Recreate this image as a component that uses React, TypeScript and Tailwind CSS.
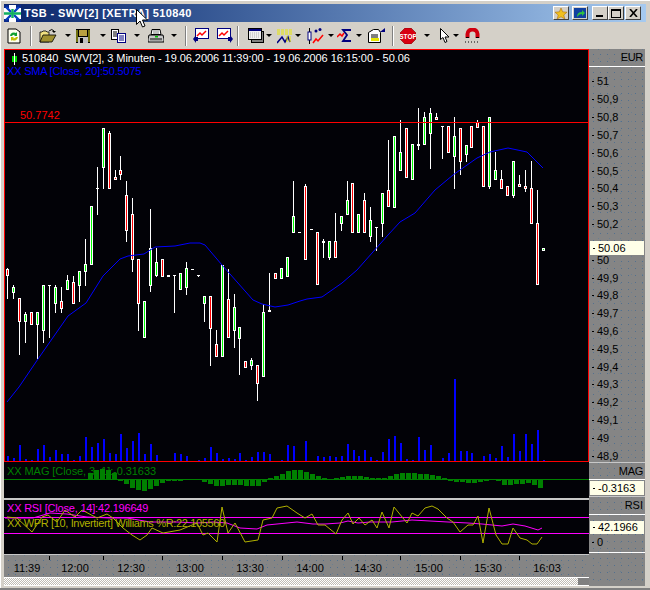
import React from "react";

type Candle = [number, number, number, number, number, "g" | "r" | "t"];

// x, wick top, wick bottom, body top, body bottom, kind (page pixels)
const candles: Candle[] = [
  [7, 268, 299, 269, 276, "r"], [13, 285, 299, 287, 293, "g"], [19, 298, 355, 298, 322, "r"],
  [25, 312, 343, 314, 322, "g"], [31, 312, 325, 312, 325, "r"], [37, 312, 359, 312, 325, "g"],
  [43, 285, 343, 285, 331, "g"], [49, 285, 338, 285, 286, "t"], [55, 285, 313, 287, 304, "g"],
  [61, 287, 313, 301, 309, "r"], [67, 275, 290, 280, 290, "g"], [73, 276, 304, 282, 304, "r"],
  [79, 271, 302, 271, 286, "g"], [85, 239, 286, 264, 272, "g"], [91, 206, 265, 206, 265, "g"],
  [97, 167, 215, 188, 189, "t"], [103, 128, 189, 128, 168, "g"], [109, 131, 189, 133, 189, "r"],
  [115, 170, 180, 177, 180, "r"], [120, 156, 180, 170, 175, "r"], [126, 181, 242, 195, 231, "r"],
  [132, 198, 272, 214, 260, "r"], [138, 259, 331, 259, 304, "r"], [144, 301, 338, 301, 338, "g"],
  [150, 209, 292, 248, 286, "g"], [156, 248, 277, 262, 276, "g"], [162, 259, 277, 259, 277, "r"],
  [168, 275, 277, 275, 277, "t"], [174, 275, 313, 275, 276, "t"], [180, 273, 290, 273, 290, "g"],
  [186, 262, 295, 268, 288, "g"], [192, 269, 270, 269, 270, "t"], [198, 275, 277, 275, 276, "t"],
  [204, 296, 322, 296, 304, "g"], [210, 296, 366, 296, 329, "r"], [216, 330, 357, 344, 357, "r"],
  [222, 265, 357, 265, 357, "g"], [228, 269, 338, 299, 338, "r"], [234, 294, 348, 307, 331, "g"],
  [239, 327, 375, 327, 339, "g"], [245, 361, 368, 361, 368, "r"], [251, 358, 370, 360, 366, "g"],
  [257, 365, 401, 365, 384, "r"], [263, 304, 377, 312, 377, "g"], [269, 273, 312, 310, 312, "r"],
  [275, 273, 279, 273, 279, "r"], [281, 268, 279, 268, 279, "g"], [287, 257, 277, 257, 277, "g"],
  [293, 181, 233, 216, 233, "g"], [299, 232, 233, 232, 233, "t"], [305, 184, 260, 186, 260, "r"],
  [311, 229, 230, 229, 230, "t"], [317, 232, 285, 232, 285, "r"], [323, 239, 258, 241, 243, "r"],
  [329, 241, 260, 241, 258, "g"], [335, 213, 258, 241, 258, "r"], [341, 216, 231, 216, 224, "g"],
  [347, 181, 215, 200, 215, "g"], [352, 183, 233, 183, 233, "r"], [358, 214, 233, 214, 233, "g"],
  [364, 193, 233, 200, 233, "r"], [370, 207, 242, 220, 237, "g"], [376, 227, 251, 227, 228, "t"],
  [382, 193, 237, 193, 224, "g"], [388, 140, 207, 190, 207, "r"], [394, 136, 208, 136, 208, "g"],
  [400, 120, 171, 152, 171, "g"], [406, 128, 178, 128, 178, "r"], [412, 144, 180, 144, 180, "g"],
  [418, 108, 150, 144, 146, "t"], [424, 112, 145, 117, 145, "g"], [430, 108, 169, 113, 134, "g"],
  [436, 113, 120, 117, 120, "r"], [442, 126, 159, 126, 127, "t"], [448, 126, 153, 126, 153, "r"],
  [454, 117, 189, 136, 157, "g"], [460, 128, 175, 128, 162, "r"], [466, 145, 162, 145, 155, "g"],
  [471, 126, 148, 126, 148, "r"], [477, 120, 128, 122, 128, "r"], [483, 126, 187, 126, 187, "r"],
  [489, 117, 189, 117, 187, "g"], [495, 152, 180, 170, 180, "g"], [501, 170, 189, 179, 189, "r"],
  [507, 186, 196, 186, 196, "r"], [513, 161, 198, 161, 196, "g"], [519, 175, 187, 184, 187, "r"],
  [525, 170, 192, 186, 189, "r"], [531, 161, 224, 188, 224, "r"], [537, 190, 285, 223, 285, "r"],
  [543, 248, 251, 248, 251, "g"],
];

// x, top of bar; all bars stand on y=461
const volume: [number, number][] = [
  [7, 456], [13, 458], [19, 445], [25, 459], [31, 460], [37, 449], [43, 445], [49, 457], [55, 450],
  [61, 454], [67, 454], [73, 460], [79, 456], [85, 437], [91, 447], [97, 443], [103, 439], [109, 453],
  [115, 454], [120, 434], [126, 448], [132, 441], [138, 433], [144, 454], [150, 444], [156, 455],
  [174, 453], [180, 454], [186, 456], [198, 460], [204, 458], [210, 447], [216, 453], [222, 459],
  [228, 458], [234, 459], [239, 453], [245, 460], [251, 457], [257, 452], [263, 452], [269, 454],
  [281, 460], [287, 445], [293, 446], [305, 441], [317, 456], [323, 457], [329, 456], [335, 457],
  [341, 456], [347, 444], [353, 450], [358, 456], [364, 450], [370, 457], [376, 460], [382, 452],
  [388, 439], [394, 436], [400, 443], [406, 459], [412, 460], [418, 437], [424, 450], [430, 445],
  [442, 458], [448, 453], [454, 379], [460, 451], [466, 451], [471, 453], [483, 456], [489, 454],
  [495, 458], [501, 446], [507, 457], [513, 434], [519, 451], [525, 434], [531, 444], [537, 430],
  [543, 460],
];

const sma = "7,402 19,387 38,359 68,316 86,303 103,276 120,259 128,256 144,254 155,247 175,246 190,243 200,243 205,245 222,265 253,300 262,304 275,307 288,305 300,301 307,299 322,297 342,283 357,270 388,235 400,222 415,213 435,190 453,175 477,158 490,152 508,148 527,152 543,168";

const mag: [number, number][] = [
  [5, 0], [85, 0], [93, 8], [103, 10], [113, 8], [120, 0], [133, -8], [143, -12], [157, -6], [167, -1], [200, 0],
  [217, -6], [233, -5], [260, -6], [267, -1], [277, 3], [290, 8], [300, 9], [313, 5], [325, 1], [335, 0],
  [345, 3], [358, 3], [372, 1], [388, 1], [393, 5], [405, 6], [425, 5], [442, 3], [447, 0], [458, -2],
  [472, -3], [485, -1], [498, 0], [505, -5], [518, -4], [532, -3], [538, -7], [545, -9],
];

const magAt = (x: number) => {
  for (let i = 1; i < mag.length; i++) {
    if (x <= mag[i][0]) {
      const [x0, y0] = mag[i - 1];
      const [x1, y1] = mag[i];
      return y0 + ((y1 - y0) * (x - x0)) / (x1 - x0);
    }
  }
  return 0;
};

const magBars = Array.from({ length: 90 }, (_, i) => 7 + i * 6);

const wpr = "7,517 17,518 32,532 42,517 48,515 57,522 65,510 75,517 82,510 97,518 107,514 113,518 123,528 132,535 140,540 147,535 152,528 163,533 180,530 197,523 203,535 208,533 217,542 222,507 228,533 235,523 245,542 258,540 263,520 272,518 277,508 287,506 297,513 305,518 312,514 318,525 325,525 336,534 342,520 348,513 353,524 359,518 365,525 372,520 377,528 382,512 389,528 394,507 407,523 412,513 418,516 425,508 432,506 438,509 447,518 453,522 460,532 468,525 473,525 478,516 483,543 489,508 496,535 502,544 508,544 513,528 520,538 527,540 532,544 537,544 542,537";
const rsi = "5,518 33,518 50,513 67,514 87,517 110,518 127,518 150,522 177,522 197,523 213,522 227,523 240,528 257,529 267,525 287,523 297,522 313,524 325,524 340,523 348,521 358,523 370,522 392,522 412,520 448,522 468,523 482,524 492,525 502,526 513,524 525,526 538,530 542,528";

// la etiqueta 50,1 queda tapada por el recuadro del último precio
const priceTicks = [
  "51", "50,9", "50,8", "50,7", "50,6", "50,5", "50,4", "50,3", "50,2", "", "50", "49,9", "49,8",
  "49,7", "49,6", "49,5", "49,4", "49,3", "49,2", "49,1", "49", "48,9",
];

const timeLabels: [string, number][] = [
  ["11:39", 27], ["12:00", 75], ["12:30", 131], ["13:00", 190], ["13:30", 250],
  ["14:00", 310], ["14:30", 368], ["15:00", 429], ["15:30", 488], ["16:03", 547],
];
const timeTicks = [49, 103, 162, 222, 282, 342, 400, 460, 519];

const dotted =
  "bg-[#858585] bg-[radial-gradient(#52708f_0.6px,transparent_0.8px),radial-gradient(#6c7f90_0.6px,transparent_0.8px)] bg-[length:7px_7px,11px_9px] bg-[position:1px_2px,4px_5px]";

function Arrow() {
  return <span className="w-0 h-0 border-x-[3px] border-x-transparent border-t-[3px] border-t-black" />;
}

function Sep() {
  return <span className="block w-[2px] h-[20px] bg-[#808080] border-r border-white" />;
}

function Logo() {
  return (
    <svg width="17" height="17" viewBox="0 0 17 17" className="shrink-0">
      <rect width="17" height="17" fill="#ffffff" />
      <path d="M0 0h5v3H0zM12 0h5v3h-5zM0 14h5v3H0zM12 14h5v3h-5z" fill="#0a2a8a" />
      <path d="M2 2l5 5M15 2l-5 5M2 15l5-5M15 15l-5-5" stroke="#0a3fc0" strokeWidth="2.4" />
      <path d="M0 8.5h17M8.5 4v9" stroke="#10b060" strokeWidth="2.4" />
    </svg>
  );
}

function Refresh() {
  return (
    <svg width="14" height="16" viewBox="0 0 14 16">
      <path d="M1 1h8l4 3v11H1z" fill="#fffff0" stroke="#000" />
      <path d="M3 8a4 4 0 0 1 6-3l1-1v4H7l1-1a2.500 2.500 0 0 0-3 1z" fill="#10a030" />
      <path d="M11 9a4 4 0 0 1-6 3l-1 1V9h3l-1 1a2.500 2.500 0 0 0 3-1z" fill="#c0c000" />
    </svg>
  );
}

function OpenIcon() {
  return (
    <svg width="18" height="15" viewBox="0 0 18 15">
      <path d="M1 4h2l1-1h3l1 1h2v10H1z" fill="#f0e080" stroke="#000" strokeWidth=".8" />
      <path d="M1 14l3-7h13l-4 7z" fill="#a09030" stroke="#000" strokeWidth=".8" />
      <path d="M10 3q3-3 5 0" fill="none" stroke="#000" />
      <path d="M13 3h4l-2 2z" fill="#000" />
    </svg>
  );
}

function SaveIcon() {
  return (
    <svg width="14" height="14" viewBox="0 0 14 14">
      <rect width="14" height="14" fill="#000" />
      <rect x="3" y="1" width="8" height="6" fill="#b8a040" />
      <rect x="2" y="8" width="10" height="6" fill="#c0c0c0" />
      <rect x="4" y="9" width="3" height="5" fill="#000" />
      <rect x="0" y="1" width="2" height="12" fill="#707010" />
      <rect x="12" y="1" width="2" height="12" fill="#707010" />
    </svg>
  );
}

function CopyIcon() {
  return (
    <svg width="15" height="14" viewBox="0 0 15 14">
      <rect x=".5" y=".5" width="7" height="10" fill="#fff" stroke="#000" />
      <path d="M2 3h4M2 5h4M2 7h4" stroke="#000" />
      <rect x="6.500" y="4.500" width="8" height="9" fill="#fff" stroke="#00007f" />
      <path d="M8 7h5M8 9h5M8 11h5" stroke="#00007f" />
    </svg>
  );
}

function PrintIcon() {
  return (
    <svg width="16" height="14" viewBox="0 0 16 14">
      <path d="M4 .5h8l1 5H3z" fill="#fff" stroke="#000" />
      <path d="M5 2h6M5 4h6" stroke="#808080" />
      <path d="M1 6h14l1 4v3H0v-3z" fill="#c8c8c8" stroke="#000" />
      <rect x="7" y="7" width="3" height="1.500" fill="#00c000" />
      <path d="M2 10h12" stroke="#000" />
      <path d="M2 12h12" stroke="#808080" />
    </svg>
  );
}

function ChartNav({ right }: { right?: boolean }) {
  return (
    <svg width="16" height="15" viewBox="0 0 16 15">
      <rect x={right ? 0.5 : 2.5} y=".5" width="13" height="10" fill="#fff" stroke="#00007f" />
      <path d={right ? "M2 8l3-3 2 2 4-4" : "M4 8l3-3 2 2 4-4"} fill="none" stroke="#ff0000" strokeWidth="1.500" />
      {right ? <path d="M11 9h2V7l3 4-3 4v-2h-2z" fill="#00007f" /> : <path d="M5 9H3V7l-3 4 3 4v-2h2z" fill="#00007f" />}
    </svg>
  );
}

function WindowsIcon() {
  return (
    <svg width="16" height="15" viewBox="0 0 16 15">
      <rect x="3.500" y="3.500" width="12" height="11" fill="#808080" stroke="#000" />
      <rect x=".5" y=".5" width="13" height="11" fill="#f0f0f0" stroke="#000" />
      <rect x="1" y="1" width="12" height="2" fill="#00007f" />
      <path d="M2 5h10M2 7h10M2 9h10" stroke="#b0b0b0" strokeDasharray="1 1" />
    </svg>
  );
}

function TimeIcon() {
  return (
    <svg width="16" height="16" viewBox="0 0 16 16">
      <path d="M0 2h16M0 4h16M0 6h16" stroke="#e8e800" strokeWidth="1.200" strokeDasharray="3 1" />
      <path d="M0 15l5-6 3 5 3-5 2 5" fill="none" stroke="#00007f" strokeWidth="1.500" />
      <path d="M9 9h6M9 11h6M9 13h6" stroke="#e8e800" strokeDasharray="2 1" />
    </svg>
  );
}

function CandleIcon() {
  return (
    <svg width="18" height="16" viewBox="0 0 18 16">
      <path d="M2.500 0v16" stroke="#000" />
      <rect x="1" y="4" width="3" height="8" fill="#fff" stroke="#00007f" />
      <circle cx="9" cy="3" r="1.500" fill="#00007f" />
      <circle cx="13" cy="1.500" r="1.500" fill="#00007f" />
      <path d="M6 15l3-4 2 2 5-6" fill="none" stroke="#ff0000" strokeWidth="1.500" />
    </svg>
  );
}

function SigmaIcon() {
  return (
    <svg width="16" height="13" viewBox="0 0 16 13">
      <path d="M0 8l3-3 2 2 2-3" fill="none" stroke="#ff0000" strokeWidth="1.500" />
      <path d="M14 1H6l4 5-4 6h8" fill="none" stroke="#00007f" strokeWidth="1.800" />
    </svg>
  );
}

function NoteIcon() {
  return (
    <svg width="17" height="15" viewBox="0 0 17 15">
      <path d="M.5 4.500l5-3h5l2 3v10H.5z" fill="#fff" stroke="#000" />
      <path d="M3 7h7M3 9h7" stroke="#000" />
      <rect x="3" y="10" width="8" height="3" fill="#e8e800" />
      <path d="M12 4l5-4v4z" fill="#00007f" />
    </svg>
  );
}

function StopIcon() {
  return (
    <svg width="16" height="16" viewBox="0 0 16 16">
      <path d="M5 0h6l5 5v6l-5 5H5l-5-5V5z" fill="#d80010" stroke="#800000" strokeWidth=".6" />
      <text x="8" y="10.500" textAnchor="middle" fontSize="6.500" fontWeight="700" fill="#fff" fontFamily="Liberation Sans, sans-serif">
        STOP
      </text>
    </svg>
  );
}

function PointerIcon() {
  return (
    <svg width="10" height="15" viewBox="0 0 10 15">
      <path d="M.5.500v11l2.500-2 2 5 2-1-2-4.500h4z" fill="#fff" stroke="#000" />
    </svg>
  );
}

function MagnetIcon() {
  return (
    <svg width="15" height="15" viewBox="0 0 15 15">
      <path d="M2.500 10V6a5 4.500 0 0 1 10 0v4" fill="none" stroke="#d00010" strokeWidth="4" />
      <path d="M1 9.500h3M11 9.500h3" stroke="#000" />
      <path d="M0 14h15" stroke="#000" strokeDasharray="1 2" />
    </svg>
  );
}

function CaptionButton({ children }: { children: React.ReactNode }) {
  return (
    <div className="w-[16px] h-[14px] bg-[#d4d0c8] border border-t-white border-l-white border-r-[#404040] border-b-[#404040] flex items-center justify-center">
      {children}
    </div>
  );
}

export default function App() {
  return (
    <div className="relative w-[650px] h-[590px] overflow-hidden bg-[#d4d0c8] font-['Liberation_Sans',sans-serif] flex flex-col pt-[4px] pl-[4px] shadow-[inset_1px_1px_0_#ffffff]">
      {/* barra de título */}
      <div className="h-[18px] w-[642px] shrink-0 flex items-center bg-gradient-to-r from-[#0a246a] to-[#a6caf0]">
        <Logo />
        <span className="ml-[3px] text-[11px] font-bold text-white tracking-[0.37px] whitespace-pre">TSB - SWV[2] [XETRA] 510840</span>
        <div className="ml-auto mr-[5px] flex items-center">
          <CaptionButton>
            <svg width="12" height="11" viewBox="0 0 12 11">
              <path d="M6 0l1.700 3.800L12 4.200 8.800 7l1 4L6 8.800 2.200 11l1-4L0 4.200l4.300-.4z" fill="#f0c020" stroke="#a06000" strokeWidth=".5" />
            </svg>
          </CaptionButton>
          <div className="w-[3px]" />
          <CaptionButton>
            <div className="w-[12px] h-[10px] bg-[#1040a0] flex items-center justify-center">
              <svg width="9" height="8" viewBox="0 0 9 8">
                <path d="M1 8q0-5 5-5V1l3 3-3 3V5q-3 0-5 3z" fill="#30c040" />
              </svg>
            </div>
          </CaptionButton>
          <div className="w-[4px]" />
          <CaptionButton>
            <div className="w-[7px] h-[2px] bg-black mt-[6px] mr-[2px]" />
          </CaptionButton>
          <CaptionButton>
            <div className="w-[10px] h-[9px] border border-black border-t-2" />
          </CaptionButton>
          <div className="w-[1px]" />
          <CaptionButton>
            <svg width="9" height="8" viewBox="0 0 9 8">
              <path d="M1 0l7 8M8 0L1 8" stroke="#000" strokeWidth="1.600" />
            </svg>
          </CaptionButton>
        </div>
      </div>

      {/* barra de herramientas */}
      <div className="h-[27px] w-[642px] shrink-0 flex items-center pl-[3px]">
        <Refresh />
        <span className="ml-[9px]"><Sep /></span>
        <span className="ml-[7px] flex"><OpenIcon /></span>
        <span className="ml-[8px] flex"><Arrow /></span>
        <span className="ml-[5px] flex"><SaveIcon /></span>
        <span className="ml-[10px] flex"><Arrow /></span>
        <span className="ml-[5px] flex"><CopyIcon /></span>
        <span className="ml-[8px] flex"><Arrow /></span>
        <span className="ml-[8px] flex"><PrintIcon /></span>
        <span className="ml-[7px] flex"><Arrow /></span>
        <span className="ml-[8px]"><Sep /></span>
        <span className="ml-[6px] flex"><ChartNav /></span>
        <span className="ml-[8px] flex"><ChartNav right /></span>
        <span className="ml-[4px]"><Sep /></span>
        <span className="ml-[9px] flex"><WindowsIcon /></span>
        <span className="ml-[2px] flex"><Arrow /></span>
        <span className="ml-[5px] flex"><TimeIcon /></span>
        <span className="ml-[2px] flex"><Arrow /></span>
        <span className="ml-[6px] flex"><CandleIcon /></span>
        <span className="ml-[3px] flex"><Arrow /></span>
        <span className="ml-[3px] flex"><SigmaIcon /></span>
        <span className="ml-[3px] flex"><Arrow /></span>
        <span className="ml-[6px] flex"><NoteIcon /></span>
        <span className="ml-[7px]"><Sep /></span>
        <span className="ml-[6px] flex"><StopIcon /></span>
        <span className="ml-[8px] flex"><Arrow /></span>
        <span className="ml-[10px] flex"><PointerIcon /></span>
        <span className="ml-[3px] flex"><Arrow /></span>
        <span className="ml-[6px] flex"><MagnetIcon /></span>
      </div>

      <div className="flex w-[642px] h-[537px] shrink-0 text-[11px]">
        {/* columna del gráfico */}
        <div className="w-[585px] shrink-0 flex flex-col">
          <div className="relative w-[585px] h-[413px] shrink-0 bg-[#020207]">
            <svg width="585" height="413" viewBox="4 49 585 413" shapeRendering="crispEdges" className="block">
              {candles.map(([x, wt, wb, bt, bb, kind], i) => (
                <g key={i}>
                  <path d={`M${x + 0.5} ${wt}V${wb}`} stroke="#ffffff" />
                  <rect x={x - 1} y={bt} width="3" height={bb - bt} fill="#ffffff" />
                  {kind !== "t" && bb - bt > 2 && (
                    <path d={`M${x + 0.5} ${bt + 1}V${bb - 1}`} stroke={kind === "g" ? "#00ff00" : "#ff0000"} />
                  )}
                </g>
              ))}
              {volume.map(([x, top]) => (
                <rect key={x} x={x} y={top} width="2" height={461 - top} fill="#0000ff" />
              ))}
              <polyline points={sma} fill="none" stroke="#0000ff" strokeWidth="1" shapeRendering="auto" />
              <path d="M4 122.500H589M4.500 49V462M588.500 49V462M4 49.500H589M4 461.500H589" stroke="#ff0000" fill="none" />
              <path d="M12 56h5v6h-5z" fill="#00e000" />
              <path d="M14.500 53v12" stroke="#ffffff" />
            </svg>
            <div className="absolute left-[18px] top-[2px] text-white text-[11px] leading-[15px] whitespace-pre tracking-[-0.06px]">
              510840  SWV[2], 3 Minuten - 19.06.2006 11:39:00 - 19.06.2006 16:15:00 - 50.06
            </div>
            <div className="absolute left-[3px] top-[15px] text-[#0000ff] text-[11px] leading-[15px] whitespace-pre tracking-[-0.2px]">XX SMA [Close, 20]:50.5075</div>
            <div className="absolute left-[16px] top-[59px] text-[#ff0000] text-[11px] leading-[15px]">50.7742</div>
          </div>

          <div className="relative w-[585px] h-[36px] shrink-0 bg-[#020207]">
            <svg width="585" height="36" viewBox="4 462 585 36" shapeRendering="crispEdges" className="block">
              <path d="M4 479.500H589" stroke="#008000" />
              {magBars.map((x) => {
                const h = Math.round(magAt(x));
                if (h === 0) return null;
                return h > 0 ? (
                  <rect key={x} x={x - 3} y={479 - h} width="5" height={h} fill="#008000" />
                ) : (
                  <rect key={x} x={x - 3} y={480} width="5" height={-h} fill="#008000" />
                );
              })}
            </svg>
            <div className="absolute left-[3px] top-[2px] text-[#008000] text-[11px] leading-[15px] whitespace-pre tracking-[-0.07px]">XX MAG [Close, 3, 1]:-0.31633</div>
          </div>

          <div className="h-[2px] w-[585px] shrink-0 bg-[#c8c8c8]" />

          <div className="relative w-[585px] h-[54px] shrink-0 bg-[#020207]">
            <svg width="585" height="54" viewBox="4 500 585 54" className="block">
              <path d="M4 517.500H589M4 533.500H589" stroke="#ff00ff" shapeRendering="crispEdges" />
              <polyline points={rsi} fill="none" stroke="#ff00ff" strokeWidth="1" />
              <polyline points={wpr} fill="none" stroke="#b0b000" strokeWidth="1" />
            </svg>
            <div className="absolute left-[3px] top-[1px] text-[#ff00ff] text-[11px] leading-[15px] whitespace-pre tracking-[-0.2px]">XX RSI [Close, 14]:42.196649</div>
            <div className="absolute left-[3px] top-[16px] text-[#b0b000] text-[11px] leading-[15px] whitespace-pre tracking-[-0.35px]">XX WPR [10, Invertiert] Williams %R:22.105560</div>
          </div>

          {/* eje de tiempo */}
          <div className={`relative w-[585px] h-[23px] shrink-0 border-t border-[#c8c8c8] text-black ${dotted}`}>
            {timeTicks.map((x) => (
              <div key={x} style={{ left: x - 4 }} className="absolute top-[1px] w-px h-[4px] bg-black" />
            ))}
            {timeLabels.map(([t, x]) => (
              <span key={t} style={{ left: x - 4 }} className="absolute top-[6px] leading-[14px] -translate-x-1/2">{t}</span>
            ))}
          </div>

          <div className="h-px w-[585px] shrink-0 bg-white" />
          {/* barra de desplazamiento */}
          <div className="h-[7px] w-[585px] shrink-0 flex bg-[length:2px_2px] bg-[repeating-conic-gradient(#c0bcb4_0_25%,#ffffff_0_50%)]">
            <div className="ml-auto w-[11px] h-full bg-[#808080]" />
          </div>
          <div className="h-px w-[585px] shrink-0 bg-white" />
        </div>

        {/* escala derecha */}
        <div className="w-[56px] shrink-0 flex flex-col text-black">
          <div className={`h-[17px] shrink-0 flex items-center justify-end pr-[2px] tracking-[-0.3px] ${dotted}`}>EUR</div>
          <div className="h-[1px] shrink-0 bg-white" />
          <div className={`relative h-[395px] shrink-0 pt-[6px] ${dotted}`}>
            {priceTicks.map((p, i) => (
              <div key={i} className="h-[17.830px] flex items-center gap-[3px] pl-[3px] leading-none">
                <span className="w-[2px] h-px bg-black" />
                <span>{p}</span>
              </div>
            ))}
            <div className="absolute left-[1px] top-[174px] w-[54px] h-[14px] bg-[#ffffe8] flex items-center gap-[3px] pl-[3px]">
              <span className="w-[2px] h-px bg-black" />
              <span>50.06</span>
            </div>
          </div>
          <div className={`h-[17px] shrink-0 flex items-center justify-end pr-[2px] tracking-[-0.3px] border-t border-[#c8c8c8] ${dotted}`}>MAG</div>
          <div className={`h-[17px] shrink-0 border-t border-white flex flex-col justify-start ${dotted}`}>
            <div className="ml-[1px] mt-[1px] w-[54px] h-[14px] bg-[#ffffe8] flex items-center gap-[3px] pl-[3px]">
              <span className="w-[2px] h-px bg-black" />
              <span>-0.3163</span>
            </div>
          </div>
          <div className={`h-[18px] shrink-0 flex items-center justify-end pr-[2px] border-t border-[#c8c8c8] ${dotted}`}>RSI</div>
          <div className={`h-[38px] shrink-0 border-t border-white flex flex-col ${dotted}`}>
            <div className="ml-[1px] mt-[6px] w-[54px] h-[13px] bg-[#ffffe8] flex items-center gap-[3px] pl-[3px]">
              <span className="w-[2px] h-px bg-black" />
              <span>42.1966</span>
            </div>
            <div className="flex items-center gap-[3px] pl-[3px] h-[17px]">
              <span className="w-[2px] h-px bg-black" />
              <span>0</span>
            </div>
          </div>
          <div className={`flex-1 border-t border-white ${dotted}`} />
        </div>
      </div>

      <div className="absolute left-0 right-0 bottom-0 h-[2px] bg-[#808080]" />

      {/* puntero del ratón */}
      <svg width="12" height="19" viewBox="0 0 12 19" className="absolute left-[136px] top-[9px]">
        <path d="M.5.500v15l3.500-3.500 2.500 6 2.500-1-2.500-6h5z" fill="#ffffff" stroke="#000000" />
      </svg>
    </div>
  );
}
